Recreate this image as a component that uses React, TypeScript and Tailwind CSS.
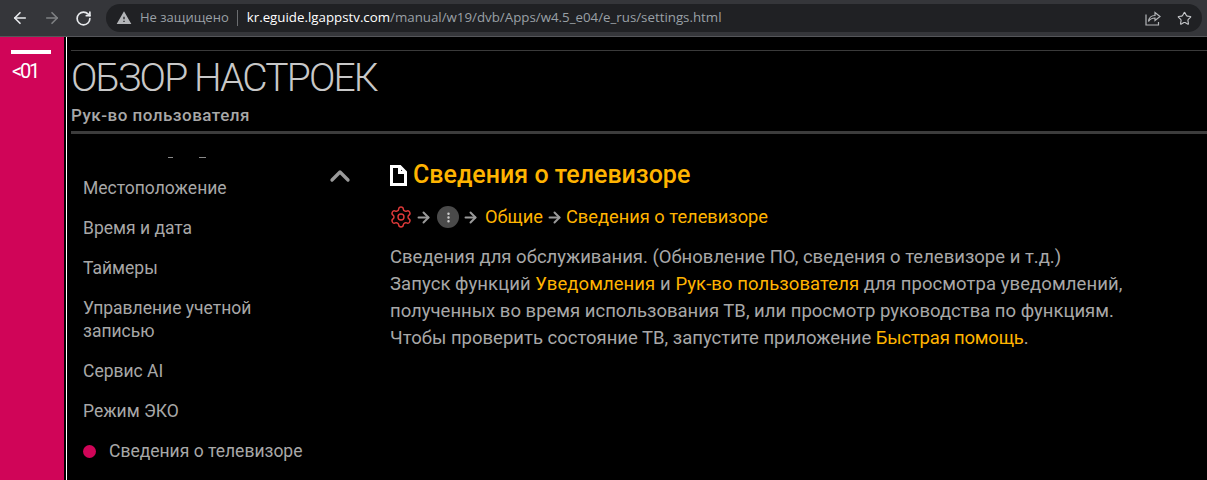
import { ArrowLeft, ArrowRight, RotateCw, Star, Settings, ChevronUp, EllipsisVertical } from "lucide-react"

const MENU = [
  { label: "Местоположение", h: "h-[40px]" },
  { label: "Время и дата", h: "h-[40px]" },
  { label: "Таймеры", h: "h-[40px]" },
  { label: "Управление учетной записью", h: "h-[63px]" },
  { label: "Сервис AI", h: "h-[40px]" },
  { label: "Режим ЭКО", h: "h-[40px]" },
]

function Arrow() {
  return <ArrowRight size={17} strokeWidth={2.8} className="text-[#9a9a9a] shrink-0 -mx-px" />
}

function Toolbar() {
  return (
    <div className="h-[37px] bg-[#35363a] border-b border-[#55565a] flex items-center shrink-0">
      <div className="flex items-center gap-[14px] pl-[11px] w-[106px]">
        <ArrowLeft size={18} strokeWidth={2.2} className="text-[#e8eaed] shrink-0" />
        <ArrowRight size={18} strokeWidth={2.2} className="text-[#7f8184] shrink-0" />
        <RotateCw size={17} strokeWidth={2.4} className="text-[#e8eaed] shrink-0" />
      </div>
      <div className="h-[28px] w-[1096px] rounded-full bg-[#202124] flex items-center pl-[10px] pr-[10px] text-[13px] font-['Open_Sans',sans-serif]">
        <svg width="16" height="16" viewBox="0 0 24 24" className="shrink-0 text-[#b3b5b8]">
          <path d="M1 21h22L12 2 1 21zm12-3h-2v-2h2v2zm0-4h-2v-4h2v4z" fill="currentColor" />
        </svg>
        <span className="ml-[8px] text-[#9aa0a6]">Не защищено</span>
        <span className="ml-[8px] mr-[9px] w-px h-[16px] bg-[#6b6d70]" />
        <span className="text-white text-[13.3px]">kr.eguide.lgappstv.com</span>
        <span className="text-[#9aa0a6] text-[13.3px]">/manual/w19/dvb/Apps/w4.5_e04/e_rus/settings.html</span>
        <div className="ml-auto flex items-center gap-[16px]">
          <svg width="16" height="16" viewBox="0 0 16 16" fill="none" stroke="#b3b5b8" strokeWidth="1.2" className="shrink-0">
            <path d="M1 4.5V15h12.5V12" />
            <path d="M3.5 11.5C4 7.5 7 5.5 10 5.5V2.5L15 6.5 10 10.5V8C7.5 8 5 9 3.5 11.5Z" />
          </svg>
          <Star size={15} strokeWidth={1.8} className="text-[#c4c6c9] shrink-0" />
        </div>
      </div>
    </div>
  )
}

export default function App() {
  return (
    <div className="w-[1207px] h-[480px] overflow-hidden bg-black flex flex-col font-['Roboto',sans-serif]">
      <Toolbar />
      <div className="flex flex-1 min-h-0">
        <div className="w-[64px] bg-[#d00558] shrink-0 pt-[13px] pl-[11px]">
          <div className="w-[40px] h-[4px] bg-white" />
          <div className="mt-[5px] pl-px text-white text-[20px] leading-[24px] tracking-[-2.2px]">&lt;01</div>
        </div>
        <div className="w-[2px] shrink-0" />
        <div className="w-px bg-white shrink-0" />
        <div className="flex-1 min-w-0 pl-[4px]">
          <div className="h-[14px] border-b border-[#3a3a3a]" />
          <div className="text-[#c8c8c8] text-[39px] leading-[44px] font-light tracking-[-1.85px] mt-[5px]">ОБЗОР НАСТРОЕК</div>
          <div className="text-[#a8a8a8] text-[17px] leading-[20px] font-medium mt-[5px] tracking-[0.5px]">Рук-во пользователя</div>
          <div className="h-[3px] bg-[#3c3c3c] mt-[6px]" />
          <div className="flex">
            <div className="w-[253px] shrink-0 pl-[12px] pr-[28px] text-[#a8a8a8] text-[17.5px] leading-[23px] pt-[23px]">
              <div className="h-[20px] flex items-start">
                <span className="ml-[85px] w-[5px] h-px bg-[#8a8a8a]" />
                <span className="ml-[26px] w-[7px] h-px bg-[#8a8a8a]" />
              </div>
              {MENU.map((m) => (
                <div key={m.label} className={m.h}>{m.label}</div>
              ))}
              <div className="flex items-center gap-[13px] whitespace-nowrap">
                <span className="w-[13px] h-[13px] rounded-full bg-[#d00558] shrink-0" />
                <span>Сведения о телевизоре</span>
              </div>
            </div>
            <div className="w-[66px] shrink-0 pt-[26px] text-[#9a9a9a]">
              <ChevronUp size={32} strokeWidth={2.5} />
            </div>
            <div className="flex-1 pt-[26px]">
              <h1 className="flex items-center gap-[6px] text-[#ffb400] text-[25px] leading-[30px] font-medium">
                <svg width="17" height="21" viewBox="0 0 17 21" fill="none" stroke="white" strokeWidth="3" className="shrink-0">
                  <path d="M1.5 1.5H10L15.5 7V19.5H1.5Z" />
                  <path d="M9.5 1.5V7.5H15.5" />
                </svg>
                Сведения о телевизоре
              </h1>
              <div className="flex items-center gap-[4px] mt-[15px] text-[#ffb400] text-[18.3px] leading-[24px]">
                <Settings size={24} strokeWidth={1.4} className="text-[#e23a3a] shrink-0 -mx-px" />
                <Arrow />
                <span className="w-[22px] h-[22px] rounded-full bg-[#4a4a4a] flex items-center justify-center shrink-0 ml-[2px]">
                  <EllipsisVertical size={13} strokeWidth={2.5} className="text-[#d0d0d0]" />
                </span>
                <Arrow />
                <span className="ml-[3px]">Общие</span>
                <Arrow />
                <span>Сведения о телевизоре</span>
              </div>
              <div className="mt-[15px] text-[#a8a8a8] text-[18.5px] leading-[27px]">
                <div>Сведения для обслуживания. (Обновление ПО, сведения о телевизоре и т.д.)</div>
                <div className="tracking-[0.07px]">
                  Запуск функций <span className="text-[#ffb400]">Уведомления</span> и{" "}
                  <span className="text-[#ffb400]">Рук-во пользователя</span> для просмотра уведомлений,
                </div>
                <div>полученных во время использования ТВ, или просмотр руководства по функциям.</div>
                <div>
                  Чтобы проверить состояние ТВ, запустите приложение{" "}
                  <span className="text-[#ffb400] tracking-[-0.2px]">Быстрая помощь</span>.
                </div>
              </div>
            </div>
          </div>
        </div>
      </div>
    </div>
  )
}
